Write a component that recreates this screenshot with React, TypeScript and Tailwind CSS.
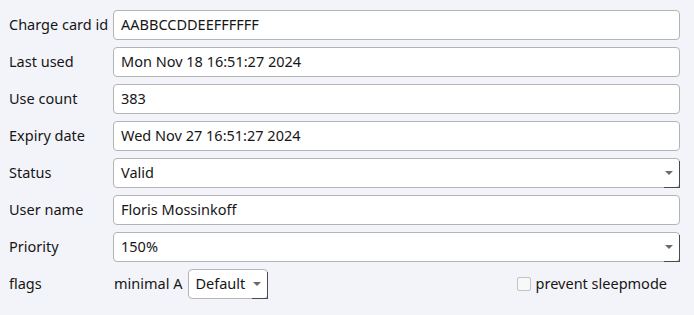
const font = { fontFamily: '"Noto Sans", "DejaVu Sans", sans-serif' }

const Field: React.FC<{ value: string; combo?: boolean }> = ({ value, combo }) => {
  return (
    <div className="relative flex h-[30px] flex-1 items-center rounded-[4px] border border-[#b4b4b4] bg-white px-[7px]">
      <span className="text-[14.5px] text-[#161616]">{value}</span>
      {combo && <ComboArrow />}
    </div>
  )
}

const ComboArrow: React.FC = () => {
  return (
    <>
      <div className="absolute right-[-1px] top-[2px] bottom-[-1px] w-[1px] bg-[#4a4a4a]" />
      <div className="absolute right-[-1px] bottom-[-1px] h-[1px] w-[16px] bg-[#4a4a4a]" />
      <div className="absolute right-[6px] top-[12px] h-0 w-0 border-x-[4px] border-t-[4px] border-x-transparent border-t-[#6a6a6a]" />
    </>
  )
}

const Row: React.FC<{ label: string; children: React.ReactNode }> = ({ label, children }) => {
  return (
    <div className="flex h-[30px] items-center">
      <div className="w-[104px] shrink-0 text-[14.5px] text-[#161616]">{label}</div>
      {children}
    </div>
  )
}

const App: React.FC = () => {
  return (
    <div className="h-[315px] w-[694px] bg-[#f3f4f9] pl-[9px] pr-[14px] pt-[10px]" style={font}>
      <div className="flex flex-col gap-[7px]">
        <Row label="Charge card id">
          <Field value="AABBCCDDEEFFFFFF" />
        </Row>
        <Row label="Last used">
          <Field value="Mon Nov 18 16:51:27 2024" />
        </Row>
        <Row label="Use count">
          <Field value="383" />
        </Row>
        <Row label="Expiry date">
          <Field value="Wed Nov 27 16:51:27 2024" />
        </Row>
        <Row label="Status">
          <Field value="Valid" combo />
        </Row>
        <Row label="User name">
          <Field value="Floris Mossinkoff" />
        </Row>
        <Row label="Priority">
          <Field value="150%" combo />
        </Row>
        <Row label="flags">
          <div className="flex flex-1 items-center">
            <span className="ml-[1px] text-[14.5px] text-[#161616]">minimal A</span>
            <div className="relative ml-[6px] flex h-[30px] w-[80px] items-center rounded-[4px] border border-[#b4b4b4] bg-white px-[6px]">
              <span className="text-[14.5px] text-[#161616]">Default</span>
              <ComboArrow />
            </div>
            <div className="ml-auto mr-[13px] flex items-center gap-[5px]">
              <div className="h-[14px] w-[14px] rounded-[2px] border border-[#c4c4c4] bg-[#f8f8f8]" />
              <span className="text-[14.5px] text-[#161616]">prevent sleepmode</span>
            </div>
          </div>
        </Row>
      </div>
    </div>
  )
}

export default App
